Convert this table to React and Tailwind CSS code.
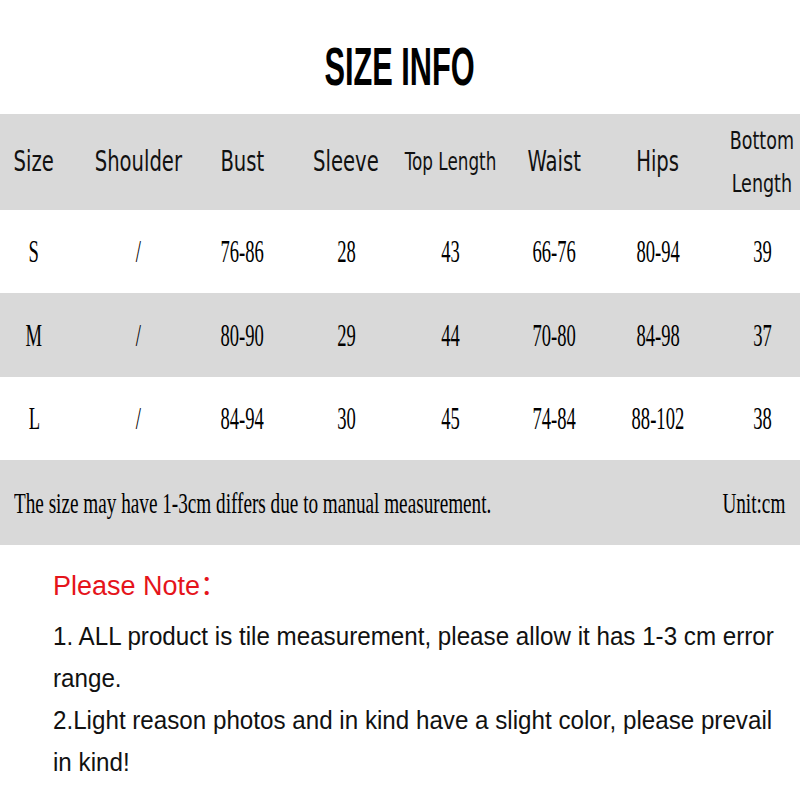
import React from "react";

const headers = [
  { label: "Size", size: "text-[28px]" },
  { label: "Shoulder", size: "text-[28px]" },
  { label: "Bust", size: "text-[28px]" },
  { label: "Sleeve", size: "text-[28px]" },
  { label: "Top Length", size: "text-[24px]" },
  { label: "Waist", size: "text-[28px]" },
  { label: "Hips", size: "text-[28px]" },
  { label: "Bottom Length", size: "text-[25px]", twoLines: true },
];

const rows = [
  { bg: "bg-white", h: "h-[83px]", cells: ["S", "/", "76-86", "28", "43", "66-76", "80-94", "39"] },
  { bg: "bg-[#d9d9d9]", h: "h-[84px]", cells: ["M", "/", "80-90", "29", "44", "70-80", "84-98", "37"] },
  { bg: "bg-white", h: "h-[83px]", cells: ["L", "/", "84-94", "30", "45", "74-84", "88-102", "38"] },
];

const sansFont = "font-['DejaVu_Sans','Liberation_Sans',sans-serif]";
const serifFont = "font-['Liberation_Serif','Times_New_Roman',serif]";

const App = () => {
  return (
    <div className="w-[800px] h-[800px] bg-white overflow-hidden text-black">
      {/* title */}
      <div className="h-[114px] flex justify-center pt-[40px]">
        <span className="inline-block scale-x-[0.58] text-[53px] leading-none font-bold font-['Liberation_Sans',Arial,sans-serif] whitespace-nowrap">
          SIZE INFO
        </span>
      </div>

      {/* header row */}
      <div className="h-[96px] bg-[#d9d9d9] overflow-hidden">
        <div className="flex -ml-[18px] h-full items-center">
          {headers.map((hd) => (
            <div key={hd.label} className="w-[104px] shrink-0 flex justify-center">
              {hd.twoLines ? (
                <span className={`inline-block scale-x-[0.7] ${hd.size} leading-[43px] text-center text-[#111] ${sansFont}`}>
                  Bottom
                  <br />
                  Length
                </span>
              ) : (
                <span className={`inline-block scale-x-[0.7] ${hd.size} leading-none whitespace-nowrap text-[#111] ${sansFont}`}>
                  {hd.label}
                </span>
              )}
            </div>
          ))}
        </div>
      </div>

      {/* data rows */}
      {rows.map((row) => (
        <div key={row.cells[0]} className={`${row.h} ${row.bg} overflow-hidden`}>
          <div className="flex -ml-[18px] h-full items-center">
            {row.cells.map((c, i) => (
              <div key={i} className="w-[104px] shrink-0 flex justify-center">
                <span className={`inline-block scale-x-[0.6] text-[31px] leading-none whitespace-nowrap ${serifFont}`}>
                  {c}
                </span>
              </div>
            ))}
          </div>
        </div>
      ))}

      {/* footer note */}
      <div className={`h-[85px] bg-[#d9d9d9] flex items-center pl-[14px] pr-[15px] text-[30px] leading-none ${serifFont}`}>
        <div className="flex-1 min-w-0">
          <span className="inline-block origin-left scale-x-[0.64] whitespace-nowrap">
            The size may have 1-3cm differs due to manual measurement.
          </span>
        </div>
        <div className="w-[62px] shrink-0 flex justify-end">
          <span className="inline-block origin-right scale-x-[0.64] whitespace-nowrap">Unit:cm</span>
        </div>
      </div>

      {/* please note */}
      <div className="pt-[22px] pl-[53px] font-['Liberation_Sans',Arial,'Noto_Sans_CJK_SC',sans-serif]">
        <p className="text-[27px] leading-[38px] mb-[10px] text-[#e5141b]">Please Note：</p>
        <div className="text-[26px] leading-[42px] text-[#111]">
          <p className="origin-left scale-x-[0.93] whitespace-nowrap">
            1. ALL product is tile measurement, please allow it has 1-3 cm error
          </p>
          <p className="origin-left scale-x-[0.93]">range.</p>
          <p className="origin-left scale-x-[0.93] whitespace-nowrap">
            2.Light reason photos and in kind have a slight color, please prevail
          </p>
          <p className="origin-left scale-x-[0.93]">in kind!</p>
        </div>
      </div>
    </div>
  );
};

export default App;
